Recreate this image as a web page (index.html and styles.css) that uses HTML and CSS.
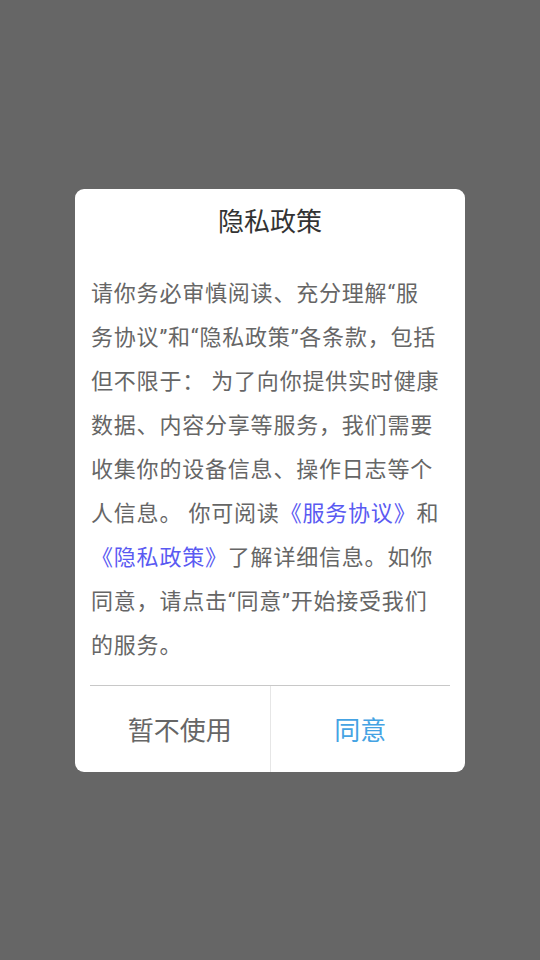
FILE: index.html
```html
<!DOCTYPE html>
<html lang="zh-CN">
  <head>
    <meta charset="UTF-8" />
    <meta name="viewport" content="width=device-width, initial-scale=1.0" />
    <title>隐私政策</title>
    <link rel="stylesheet" href="styles.css">
  </head>
  <body>
    <main class="overlay">
      <section class="dialog">
        <h2 class="dialog-title">隐私政策</h2>
        <p class="dialog-text">请你务必审慎阅读、充分理解“服<br>务协议”和“隐私政策”各条款，包括<br>但不限于： 为了向你提供实时健康<br>数据、内容分享等服务，我们需要<br>收集你的设备信息、操作日志等个<br>人信息。 你可阅读<a class="link" href="#">《服务协议》</a>和<br><a class="link" href="#">《隐私政策》</a>了解详细信息。如你<br>同意，请点击“同意”开始接受我们<br>的服务。</p>
        <footer class="dialog-actions">
          <button class="action action-cancel">暂不使用</button>
          <button class="action action-ok">同意</button>
        </footer>
      </section>
    </main>
  </body>
</html>
```

FILE: styles.css
```css
*,
*::before,
*::after {
  box-sizing: border-box;
}

body {
  font-family: Roboto, 'Noto Sans CJK SC', sans-serif;
  background: #666;
  margin: 0;
}

.overlay {
  min-height: 960px;
  display: flex;
  justify-content: center;
  align-items: center;
}

.dialog {
  width: 390px;
  background: #fff;
  border-radius: 9px;
  display: flex;
  flex-direction: column;

  .dialog-title {
    margin: 15px 0 0;
    font-size: 26px;
    line-height: 36px;
    font-weight: 400;
    color: #333;
    text-align: center;
  }

  .dialog-text {
    margin: 32px 0 0;
    padding: 0 16px;
    font-size: 22px;
    line-height: 44px;
    letter-spacing: 0.8px;
    color: #666;
    white-space: nowrap;
  }

  .link {
    color: #5a5af2;
    text-decoration: none;
  }
}

.dialog-actions {
  margin: 17px 15px 0;
  border-top: 1px solid #c8c8c8;
  display: flex;

  .action {
    flex: 1;
    height: 86px;
    border: 0;
    background: none;
    font-family: inherit;
    font-size: 26px;
    color: #666;
    padding: 0;
  }

  .action-cancel {
    border-right: 1px solid #e6e6e6;
  }

  .action-ok {
    color: #45a3e3;
  }
}
```
